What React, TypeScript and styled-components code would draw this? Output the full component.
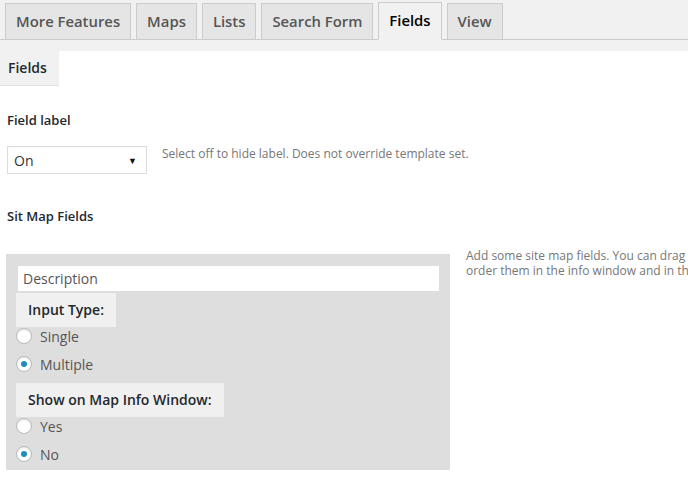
import styled, { createGlobalStyle } from 'styled-components';

const GlobalStyle = createGlobalStyle`
  html, body {
    margin: 0;
    padding: 0;
    background: #f1f1f1;
    font-family: "Open Sans", "Liberation Sans", sans-serif;
    color: #23282d;
    overflow: hidden;
  }
`;

const TabWrapper = styled.div`
  display: flex;
  gap: 5px;
  padding: 3px 0 0 5px;
  border-bottom: 1px solid #ccc;
  height: 36px;
  box-sizing: content-box;
`;

const Tab = styled.div<{ active?: boolean }>`
  padding: 5px 10px;
  line-height: 25px;
  box-sizing: border-box;
  margin-top: ${p => (p.active ? '-1px' : '0')};
  height: ${p => (p.active ? '38px' : '37px')};
  font-size: 14.85px;
  font-weight: 600;
  color: ${p => (p.active ? '#000' : '#555')};
  background: ${p => (p.active ? '#f1f1f1' : '#e5e5e5')};
  border: 1px solid #ccc;
  border-bottom-color: ${p => (p.active ? '#f1f1f1' : '#ccc')};
  white-space: nowrap;
`;

const Panel = styled.div`
  margin-top: 11px;
  background: #fff;
  min-height: 440px;
  overflow: hidden;
`;

const SubTabs = styled.div`
  display: flex;
`;

const SubTab = styled.div`
  width: 59px;
  height: 35px;
  box-sizing: border-box;
  padding: 0 0 0 8px;
  line-height: 34px;
  font-size: 14px;
  font-weight: 600;
  background: #f1f1f1;
  border-bottom: 1px solid #e2e2e2;
  color: #23282d;
`;

const SectionTitle = styled.div<{ top: number }>`
  margin: ${p => p.top}px 0 0 7px;
  font-size: 13px;
  font-weight: 600;
  line-height: 18px;
  color: #23282d;
`;

const SelectRow = styled.div`
  display: flex;
  align-items: flex-start;
  margin: 17px 0 0 7px;
`;

const Select = styled.div`
  width: 140px;
  height: 28px;
  box-sizing: border-box;
  border: 1px solid #ddd;
  background: #fff;
  display: flex;
  align-items: center;
  justify-content: space-between;
  padding: 0 9px 0 6px;
  font-size: 14px;
  color: #333;
  box-shadow: inset 0 1px 2px rgba(0, 0, 0, 0.04);
`;

const Arrow = styled.span`
  font-size: 9px;
  color: #111;
`;

const Help = styled.div`
  margin-left: 15px;
  font-size: 12px;
  line-height: 16px;
  color: #777;
  white-space: nowrap;
`;

const FieldsRow = styled.div`
  display: flex;
  align-items: flex-start;
  gap: 16px;
  margin: 29px 0 0 6px;
`;

const FieldsBox = styled.div`
  width: 444px;
  flex-shrink: 0;
  box-sizing: border-box;
  background: #dedede;
  padding: 12px 10px 7px 10px;
`;

const TextInput = styled.div`
  height: 25px;
  margin: 0 1px 2px 2px;
  background: #fff;
  padding-left: 5px;
  line-height: 25px;
  font-size: 14px;
  color: #555;
`;

const OptionLabel = styled.div`
  display: inline-block;
  background: #f0f0f0;
  padding: 0 12px;
  height: 34px;
  line-height: 34px;
  font-size: 14px;
  font-weight: 600;
  color: #23282d;
`;

const RadioRow = styled.div`
  display: flex;
  align-items: center;
  gap: 8px;
  height: 18px;
  margin: 0 0 10px;
  font-size: 14px;
  color: #555;
  &:last-child {
    margin-bottom: 0;
  }
`;

const RadioCircle = styled.span<{ checked?: boolean }>`
  width: 16px;
  height: 16px;
  box-sizing: border-box;
  border-radius: 50%;
  border: 1px solid #b4b9be;
  background: #fff;
  box-shadow: inset 0 1px 2px rgba(0, 0, 0, 0.1);
  display: flex;
  align-items: center;
  justify-content: center;
  &::after {
    content: '';
    display: ${p => (p.checked ? 'block' : 'none')};
    width: 6px;
    height: 6px;
    border-radius: 50%;
    background: #1e8cbe;
  }
`;

const Group = styled.div`
  display: flex;
  flex-direction: column;
`;

const SideHelp = styled.div`
  margin-top: -5px;
  font-size: 12px;
  line-height: 14.5px;
  color: #777;
  white-space: nowrap;
`;

const tabs = ['More Features', 'Maps', 'Lists', 'Search Form', 'Fields', 'View'];

const Radio = ({ label, checked }: { label: string; checked?: boolean }) => (
  <RadioRow>
    <RadioCircle checked={checked} />
    {label}
  </RadioRow>
);

export default function App() {
  return (
    <>
      <GlobalStyle />
      <TabWrapper>
        {tabs.map(t => (
          <Tab key={t} active={t === 'Fields'}>
            {t}
          </Tab>
        ))}
      </TabWrapper>
      <Panel>
        <SubTabs>
          <SubTab>Fields</SubTab>
        </SubTabs>
        <SectionTitle top={25}>Field label</SectionTitle>
        <SelectRow>
          <Select>
            On
            <Arrow>▼</Arrow>
          </Select>
          <Help>Select off to hide label. Does not override template set.</Help>
        </SelectRow>
        <SectionTitle top={33}>Sit Map Fields</SectionTitle>
        <FieldsRow>
          <FieldsBox>
            <TextInput>Description</TextInput>
            <Group>
              <div>
                <OptionLabel>Input Type:</OptionLabel>
              </div>
              <Radio label="Single" />
              <Radio label="Multiple" checked />
              <div>
                <OptionLabel>Show on Map Info Window:</OptionLabel>
              </div>
              <Radio label="Yes" />
              <Radio label="No" checked />
            </Group>
          </FieldsBox>
          <SideHelp>
            Add some site map fields. You can drag and drop them to
            <br />
            order them in the info window and in the list.
          </SideHelp>
        </FieldsRow>
      </Panel>
    </>
  );
}
